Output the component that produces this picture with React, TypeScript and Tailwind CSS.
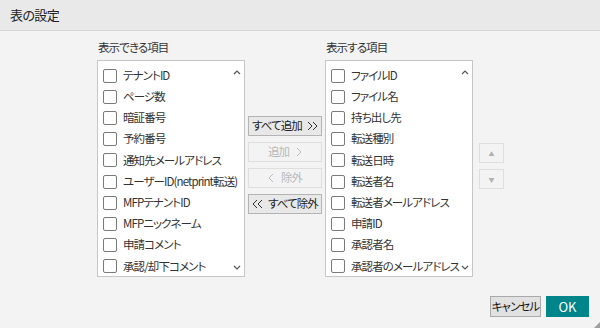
import React from "react";

const leftItems = [
  "テナントID",
  "ページ数",
  "暗証番号",
  "予約番号",
  "通知先メールアドレス",
  "ユーザーID(netprint転送)",
  "MFPテナントID",
  "MFPニックネーム",
  "申請コメント",
  "承認/却下コメント",
];

const rightItems = [
  "ファイルID",
  "ファイル名",
  "持ち出し先",
  "転送種別",
  "転送日時",
  "転送者名",
  "転送者メールアドレス",
  "申請ID",
  "承認者名",
  "承認者のメールアドレス",
];

function ListBox({ items }: { items: string[] }) {
  return (
    <div className="relative h-[217px] w-[148px] border border-[#c6c6c6] bg-white">
      <div className="flex flex-col pt-[4px] pl-[5px]">
        {items.map((t) => (
          <div key={t} className="flex h-[21.2px] items-center gap-[6px] whitespace-nowrap">
            <span className="h-[14px] w-[14px] shrink-0 rounded-[2px] border-[1.5px] border-[#7a7a7a] bg-white" />
            <span className="text-[11.5px] leading-none tracking-[-0.9px] text-[#333]">{t}</span>
          </div>
        ))}
      </div>
      <svg className="absolute right-[3px] top-[9px]" width="8" height="5" viewBox="0 0 8 5">
        <path d="M1 4 L4 1 L7 4" fill="none" stroke="#555" strokeWidth="1.2" />
      </svg>
      <svg className="absolute right-[3px] bottom-[6px]" width="8" height="5" viewBox="0 0 8 5">
        <path d="M1 1 L4 4 L7 1" fill="none" stroke="#555" strokeWidth="1.2" />
      </svg>
    </div>
  );
}

function MidButton({ children, disabled }: { children: React.ReactNode; disabled?: boolean }) {
  return (
    <div
      className={
        disabled
          ? "flex h-[20px] w-[74px] items-center justify-center gap-[7px] whitespace-nowrap border border-[#dedede] bg-[#f3f3f3] text-[11.5px] tracking-[-0.9px] text-[#b9b9b9]"
          : "flex h-[20px] w-[74px] items-center justify-center gap-[5px] whitespace-nowrap border border-[#b4b4b4] bg-[#e8e8e8] text-[11.5px] tracking-[-0.9px] text-[#222]"
      }
    >
      {children}
    </div>
  );
}

function Chev({ dir, double, color }: { dir: "l" | "r"; double?: boolean; color: string }) {
  const d =
    dir === "r"
      ? double
        ? "M1 1 L5 5 L1 9 M6 1 L10 5 L6 9"
        : "M1 1 L5 5 L1 9"
      : double
      ? "M5 1 L1 5 L5 9 M10 1 L6 5 L10 9"
      : "M5 1 L1 5 L5 9";
  return (
    <svg width={double ? 11 : 6} height="10" viewBox={double ? "0 0 11 10" : "0 0 6 10"}>
      <path d={d} fill="none" stroke={color} strokeWidth="1" />
    </svg>
  );
}

export default function App() {
  return (
    <div
      className="relative flex h-[328px] w-[600px] flex-col overflow-hidden bg-[#f3f3f3] [font-feature-settings:'palt']"
      style={{ fontFamily: '"Noto Sans CJK JP", "Noto Sans", sans-serif' }}
    >
      <div className="flex h-[31px] items-center border-b border-[#d6d6d6] bg-[#e9e9e9] pl-[10px] text-[13px] tracking-[-0.6px] text-[#222]">
        表の設定
      </div>
      <div className="flex flex-1 flex-col">
        <div className="flex pl-[97px] pt-[8px]">
          <div className="flex flex-col">
            <div className="mb-[4px] h-[17px] pl-[1px] text-[11.5px] leading-[17px] tracking-[-0.9px] text-[#333]">表示できる項目</div>
            <ListBox items={leftItems} />
          </div>
          <div className="ml-[3px] flex flex-col gap-[6px] pt-[77px]">
            <MidButton>
              <span>すべて追加</span>
              <Chev dir="r" double color="#333" />
            </MidButton>
            <MidButton disabled>
              <span>追加</span>
              <Chev dir="r" color="#bbb" />
            </MidButton>
            <MidButton disabled>
              <Chev dir="l" color="#bbb" />
              <span>除外</span>
            </MidButton>
            <MidButton>
              <Chev dir="l" double color="#333" />
              <span>すべて除外</span>
            </MidButton>
          </div>
          <div className="ml-[3px] flex flex-col">
            <div className="mb-[4px] h-[17px] pl-[1px] text-[11.5px] leading-[17px] tracking-[-0.9px] text-[#333]">表示する項目</div>
            <ListBox items={rightItems} />
          </div>
          <div className="ml-[6px] flex flex-col gap-[6px] pt-[104px]">
            <div className="flex h-[20px] w-[25px] items-center justify-center border border-[#dedede] bg-[#f3f3f3] text-[6px] text-[#b0b0b0]">
              ▲
            </div>
            <div className="flex h-[20px] w-[25px] items-center justify-center border border-[#dedede] bg-[#f3f3f3] text-[6px] text-[#b0b0b0]">
              ▼
            </div>
          </div>
        </div>
        <div className="mt-[19px] flex justify-end gap-[5px] pr-[11px]">
          <div className="flex h-[21px] w-[51px] items-center justify-center whitespace-nowrap border border-[#a9a9a9] bg-[#e1e1e1] text-[11.5px] tracking-[-0.9px] text-[#111]">
            キャンセル
          </div>
          <div className="flex h-[21px] w-[43px] items-center justify-center bg-[#00858a] text-[13px] text-white">
            OK
          </div>
        </div>
      </div>
      <svg className="absolute bottom-0 right-0" width="6" height="6" viewBox="0 0 6 6">
        <path d="M6 0 L6 6 L0 6 Z" fill="#a0a0a0" />
      </svg>
    </div>
  );
}
